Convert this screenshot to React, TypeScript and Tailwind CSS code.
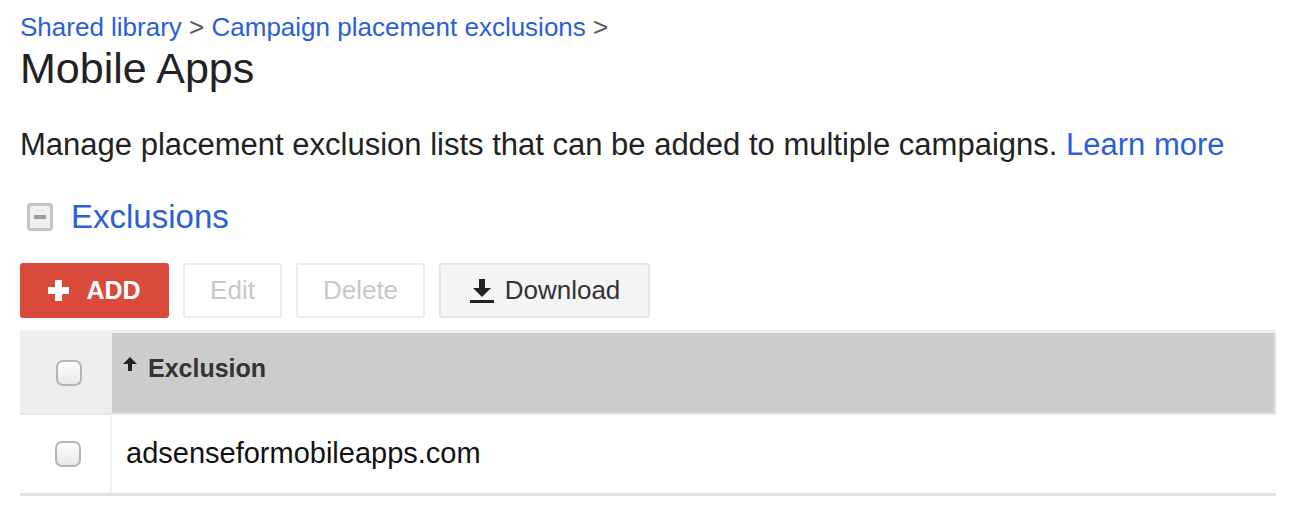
const font = { fontFamily: '"Liberation Sans", Arial, sans-serif' };

function Checkbox() {
  return (
    <div className="h-[26px] w-[26px] rounded-[7px] border-2 border-[#b5b5b5] bg-gradient-to-b from-white to-[#e9e9e9]" />
  );
}

function PlusIcon() {
  return (
    <svg width="21" height="21" viewBox="0 0 21 21" fill="currentColor">
      <rect x="7" y="0" width="7" height="21" />
      <rect x="0" y="7" width="21" height="7" />
    </svg>
  );
}

function DownloadIcon() {
  return (
    <svg width="26" height="24" viewBox="0 0 26 24" fill="#222">
      <rect x="10" y="0" width="6" height="10" />
      <polygon points="4,9 22,9 13,18" />
      <rect x="1" y="21" width="24" height="3" />
    </svg>
  );
}

function SortUpIcon() {
  return (
    <svg width="14" height="14" viewBox="0 0 14 14" fill="#222">
      <polygon points="0,7 14,7 7,0" />
      <rect x="5" y="6" width="4" height="8" />
    </svg>
  );
}

export default function App() {
  return (
    <main
      className="h-[508px] w-[1292px] overflow-hidden bg-white pl-[20px] pr-[16px] pt-[13px] text-[#222]"
      style={font}
    >
      {/* Breadcrumb */}
      <div className="text-[26px] leading-[28px]">
        <a className="text-[#2b5ed8]">Shared library</a>
        <span className="text-[#555]"> &gt; </span>
        <a className="text-[#2b5ed8]">Campaign placement exclusions</a>
        <span className="text-[#555]"> &gt;</span>
      </div>

      <h1 className="mt-[4px] text-[43px] leading-[46px] text-[#222]">Mobile Apps</h1>

      <p className="mt-[36px] text-[31px] leading-[36px] text-[#222]">
        Manage placement exclusion lists that can be added to multiple campaigns.{" "}
        <a className="text-[#2b5ed8]">Learn more</a>
      </p>

      {/* Section header */}
      <div className="mt-[35px] flex h-[38px] items-center">
        <div className="ml-[7px] flex h-[28px] w-[26px] items-center justify-center rounded-[4px] border-[3px] border-[#c4c4c4] bg-[#efefef]">
          <div className="h-[4px] w-[12px] bg-[#9c9c9c]" />
        </div>
        <h2 className="ml-[18px] text-[33px] leading-[38px] text-[#2b5ed8]">Exclusions</h2>
      </div>

      {/* Toolbar */}
      <div className="mt-[27px] flex gap-[14px]">
        <button className="flex h-[55px] w-[149px] items-center justify-center gap-[17px] rounded-[3px] bg-[#d94a3a] text-[25px] font-bold text-white">
          <PlusIcon />
          ADD
        </button>
        <button className="h-[55px] w-[99px] rounded-[3px] border-2 border-[#ececec] bg-white text-[26px] text-[#c8c8c8]">
          Edit
        </button>
        <button className="h-[55px] w-[129px] rounded-[3px] border-2 border-[#ececec] bg-white text-[26px] text-[#c8c8c8]">
          Delete
        </button>
        <button className="flex h-[55px] w-[211px] items-center justify-center gap-[10px] rounded-[3px] border-2 border-[#e6e6e6] bg-[#f5f5f5] text-[26px] text-[#333]">
          <DownloadIcon />
          Download
        </button>
      </div>

      {/* Table */}
      <div className="mt-[12px] border-t-[3px] border-[#f0f0f0]">
        <div className="flex h-[82px] border-b-[2px] border-[#e8e8e8]">
          <div className="flex w-[92px] items-center justify-center bg-[#eeeeee] pl-[5px]">
            <Checkbox />
          </div>
          <div className="flex flex-1 items-start border-r-2 border-[#e2e2e2] bg-[#cccccc] pl-[11px] pt-[20px] text-[25px] font-bold text-[#333]">
            <span className="mr-[11px] mt-[4px]">
              <SortUpIcon />
            </span>
            <span className="leading-[30px]">Exclusion</span>
          </div>
        </div>
        <div className="flex h-[81px] border-b-[3px] border-[#e2e2e2]">
          <div className="flex w-[92px] items-center justify-center border-r-2 border-[#f2f2f2] bg-white pl-[5px]">
            <Checkbox />
          </div>
          <div className="flex flex-1 items-center pl-[14px] text-[29px] text-[#111]">
            adsenseformobileapps.com
          </div>
        </div>
      </div>
    </main>
  );
}
